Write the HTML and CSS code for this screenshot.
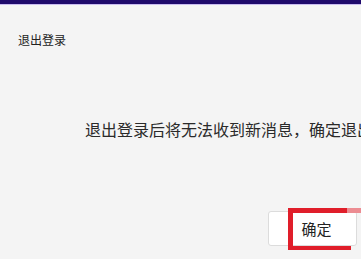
FILE: index.html
```html
<!DOCTYPE html>
<html lang="zh-CN">
<head>
<meta charset="utf-8">
<title>退出登录</title>
<link rel="stylesheet" href="styles.css">
</head>
<body>
<div class="topbar"></div>
<div class="dialog">
  <div class="title">退出登录</div>
  <div class="message">退出登录后将无法收到新消息，确定退出登录吗？</div>
  <div class="footer">
    <button class="btn">确定</button>
  </div>
</div>
<div class="mark mark-top"></div>
<div class="mark mark-top-light"></div>
<div class="mark mark-left"></div>
<div class="mark mark-bottom"></div>
</body>
</html>
```
FILE: styles.css
```css
html, body {
  margin: 0;
  padding: 0;
  width: 361px;
  height: 259px;
  overflow: hidden;
  background: #f4f4f4;
  font-family: "Noto Sans CJK SC", "Noto Sans", sans-serif;
  color: #222;
  position: relative;
}
.topbar {
  height: 4px;
  background: #1f0a6b;
  border-bottom: 1px solid #c9bcef;
}
.dialog {
  display: flex;
  flex-direction: column;
}
.title {
  margin: 27px 0 0 18px;
  font-size: 12px;
  line-height: 16px;
  white-space: nowrap;
}
.message {
  margin: 71px 0 0 85px;
  font-size: 16px;
  line-height: 20px;
  white-space: nowrap;
  overflow: hidden;
  color: #2a2a2a;
}
.footer {
  margin-top: 72px;
  display: flex;
  padding-left: 268px;
}
.btn {
  width: 89px;
  height: 35px;
  box-sizing: border-box;
  background: #fff;
  border: 1px solid #dcdcdc;
  border-radius: 3px;
  font-family: "Noto Sans CJK SC", "Noto Sans", sans-serif;
  font-size: 15px;
  color: #222;
  padding: 0 0 0 8px;
  margin: 0;
  line-height: 33px;
}
.mark {
  position: absolute;
  background: #e01e2a;
}
.mark-top { left: 288px; top: 208px; width: 59px; height: 5px; }
.mark-top-light { left: 347px; top: 208px; width: 14px; height: 5px; background: #ec8c92; }
.mark-left { left: 288px; top: 208px; width: 5px; height: 42px; }
.mark-bottom { left: 288px; top: 246px; width: 63px; height: 4px; }
```
